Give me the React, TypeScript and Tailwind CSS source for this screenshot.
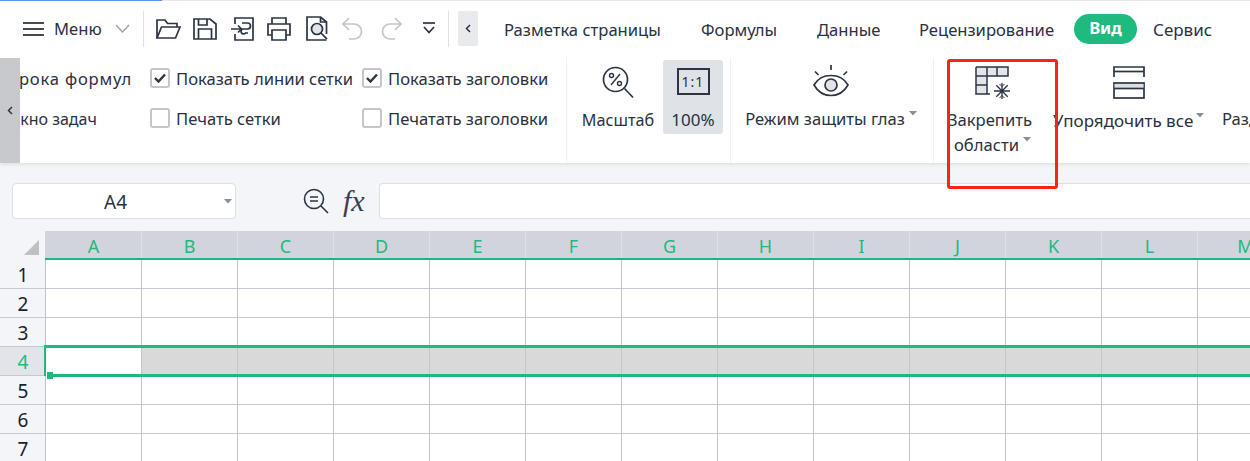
import React from "react";

const S = "#2c3444";

function Svg({ w, h, children, className }: { w: number; h: number; children: React.ReactNode; className?: string }) {
  return (
    <svg width={w} height={h} viewBox={`0 0 ${w} ${h}`} fill="none" stroke={S} strokeWidth={1.7} className={className}>
      {children}
    </svg>
  );
}

const Folder = () => (
  <Svg w={26} h={24}>
    <path d="M2 21V3h8l2.500 3.500H22V10" />
    <path d="M2 21L6.500 10H25L20.500 21Z" />
  </Svg>
);
const Save = () => (
  <Svg w={24} h={24}>
    <path d="M1 2H17L23 7V22H1Z" />
    <path d="M5.500 2V8H14V2M5.500 22V12H18.500V22" />
  </Svg>
);
const Export = () => (
  <Svg w={26} h={26}>
    <path d="M5 8V2H23V24H5V18" />
    <path d="M1 13H11M8 9.500L11.500 13L8 16.500" />
    <path d="M12 7H17.500A3 3 0 0 1 17.500 13H13A2.500 2.500 0 1 0 15.500 17H18" />
  </Svg>
);
const Printer = () => (
  <Svg w={26} h={26}>
    <path d="M6 8V2H20V8" />
    <path d="M6 19H2V8H24V19H20" />
    <path d="M6 14H20V24H6Z" />
  </Svg>
);
const Preview = () => (
  <Svg w={24} h={26}>
    <path d="M21.500 18V6L15.500 1H2V24H21.500" />
    <path d="M15.500 1V6H21.500" />
    <circle cx="12" cy="13" r="5.500" fill="#e4e5e8" />
    <path d="M16 17L22 23" />
  </Svg>
);
const Undo = ({ flip }: { flip?: boolean }) => (
  <svg width={22} height={24} viewBox="0 0 22 24" fill="none" stroke="#c3c5c9" strokeWidth={1.7} style={flip ? { transform: "scaleX(-1)" } : undefined}>
    <path d="M8 1L2 7L8 13" />
    <path d="M2 7H13A7.500 7.500 0 0 1 13 22H8" />
  </svg>
);
const QuickMenu = () => (
  <Svg w={14} h={13}>
    <path d="M1 1H13" />
    <path d="M2 5L7 10.500L12 5" />
  </Svg>
);
const ZoomIcon = () => (
  <Svg w={32} h={33}>
    <circle cx="13.500" cy="13.500" r="12" />
    <path d="M22.500 22.500L31 31.500" />
    <path d="M9 19L18 8" strokeWidth={1.4} />
    <circle cx="9.500" cy="9.500" r="2" strokeWidth={1.4} />
    <circle cx="17.500" cy="17.500" r="2" strokeWidth={1.4} />
  </Svg>
);
const Eye = () => (
  <Svg w={36} h={34}>
    <path d="M18 1V6M2 7.500L5.500 11M34 7.500L30.500 11" />
    <path d="M1 21C5 14 11 11.500 18 11.500C25 11.500 31 14 35 21C31 28 25 31.500 18 31.500C11 31.500 5 28 1 21Z" />
    <circle cx="18" cy="21" r="6" fill="#e2e3e6" />
  </Svg>
);
const Freeze = () => (
  <Svg w={38} h={34}>
    <rect x="1" y="1" width="11" height="27" fill="#e4e5e8" stroke="none" />
    <rect x="12" y="1" width="21" height="9" fill="#e4e5e8" stroke="none" />
    <path d="M1 1H33V10H1M1 19H12M1 1V28H15M12 1V28M22 1V10M33 1V10" strokeWidth={1.5} />
    <path d="M19 25H35M27 17V33M21.300 19.300L32.700 30.700M32.700 19.300L21.300 30.700" strokeWidth={1.3} />
    <path d="M24.500 18L27 20.500L29.500 18M24.500 32L27 29.500L29.500 32" strokeWidth={1} />
  </Svg>
);
const Arrange = () => (
  <Svg w={32} h={34}>
    <path d="M1 11V1H31V11" />
    <path d="M1 5.500H31" />
    <rect x="1" y="17" width="30" height="15" />
    <rect x="1.500" y="18" width="29" height="4" fill="#dcdde0" stroke="none" />
    <path d="M1 22.500H31" />
  </Svg>
);
const Caret = ({ className = "" }: { className?: string }) => (
  <svg width={8} height={5} viewBox="0 0 8 5" className={className}>
    <path d="M0 0H8L4 4.500Z" fill="#8a8e99" />
  </svg>
);

function Check({ on, label }: { on?: boolean; label: string }) {
  return (
    <div className="flex h-5 items-center gap-[6px] whitespace-nowrap">
      <span className="flex h-5 w-5 items-center justify-center rounded-[3px] border-2 border-[#c4c6cb] bg-white">
        {on && (
          <svg width="14" height="12" viewBox="0 0 14 12" fill="none" stroke={S} strokeWidth={2.4}>
            <path d="M2 6L5.500 9.500L12 2.500" />
          </svg>
        )}
      </span>
      <span className="pt-[2px]">{label}</span>
    </div>
  );
}

const Sep = () => <div className="h-[105px] w-px shrink-0 bg-[#f0f1f3]" />;

const cols = ["A", "B", "C", "D", "E", "F", "G", "H", "I", "J", "K", "L", "M"];

function GridRow({ n }: { n: number }) {
  const active = n === 4;
  return (
    <div className={`relative flex h-[29px] shrink-0 ${active ? "z-10" : ""}`}>
      <div
        className={`flex w-[46px] shrink-0 items-center justify-center border-r border-b border-r-[#bfc3cf] border-b-[#c6c9d4] pl-[1px] pt-[3px] text-[19px] ${
          active ? "bg-[#e2e4ea] text-[#20b97f]" : "bg-[#f4f5f8] text-[#1b1f2a]"
        }`}
      >
        {n}
      </div>
      {cols.map((c, i) => (
        <div
          key={c}
          className={`h-full w-[96px] shrink-0 border-r border-b border-r-[#c3c6d2] border-b-[#c6c9d4] ${
            active && i > 0 ? "bg-[#d9d9d9]" : "bg-white"
          }`}
        />
      ))}
      {active && (
        <>
          <div className="absolute left-[44px] right-0 top-[-2px] h-[3px] bg-[#1fb97e]" />
          <div className="absolute left-[44px] top-[-2px] h-[31px] w-[2px] bg-[#1fb97e]" />
          <div className="absolute left-[53px] right-0 top-[27px] h-[3px] bg-[#1fb97e]" />
          <div className="absolute left-[46px] top-[25px] h-[7px] w-[7px] border-l border-white bg-[#1fb97e]" />
        </>
      )}
    </div>
  );
}

export default function App() {
  return (
    <div
      className="relative flex h-[461px] w-[1250px] flex-col overflow-hidden bg-white text-[16.6px] text-[#2a3142]"
      style={{ fontFamily: '"Noto Sans", "Liberation Sans", sans-serif' }}
    >
      <div className="flex h-px shrink-0 bg-[#e6e8ec]">
        <div className="w-[162px] bg-[#5b8ff9]" />
      </div>

      {/* top bar */}
      <div className="flex h-[57px] shrink-0 items-center pb-[2px]">
        <div className="ml-[23px] flex w-[21px] flex-col gap-[4px]">
          <div className="h-[2px] bg-[#454b59]" />
          <div className="h-[2px] bg-[#454b59]" />
          <div className="h-[2px] bg-[#454b59]" />
        </div>
        <span className="ml-[10px] w-[49px] whitespace-nowrap pt-[2px]">Меню</span>
        <svg width="15" height="9" viewBox="0 0 15 9" fill="none" stroke="#9ca0a8" strokeWidth="1.400" className="ml-[12px]">
          <path d="M1 1L7.500 8L14 1" />
        </svg>
        <div className="ml-[13px] h-[36px] w-px bg-[#dfe1e5]" />
        <div className="ml-[11px] flex items-center">
          <Folder />
          <span className="w-[12px]" />
          <Save />
          <span className="w-[13px]" />
          <Export />
          <span className="w-[10px]" />
          <Printer />
          <span className="w-[13px]" />
          <Preview />
          <span className="w-[12px]" />
          <Undo />
          <span className="w-[18px]" />
          <Undo flip />
          <span className="w-[19px]" />
          <QuickMenu />
        </div>
        <div className="ml-[12px] h-[36px] w-px bg-[#dfe1e5]" />
        <div className="ml-[9px] flex h-[35px] w-[20px] items-center justify-center bg-[#e8eaee]">
          <svg width="6" height="9" viewBox="0 0 6 9" fill="none" stroke={S} strokeWidth="1.500">
            <path d="M5 1L1.500 4.500L5 8" />
          </svg>
        </div>
        <div className="relative ml-[26px] flex items-center whitespace-nowrap">
          <span className="w-[197px] pt-[3px]">Разметка страницы</span>
          <span className="w-[116px] pt-[3px]">Формулы</span>
          <span className="w-[102px] pt-[3px]">Данные</span>
          <span className="w-[155px] pt-[3px]">Рецензирование</span>
          <span className="flex h-[30px] w-[63px] items-center justify-center rounded-full bg-[#1fba7f] font-bold text-white">Вид</span>
          <span className="ml-[16px] pt-[3px] text-[17px]">Сервис</span>
        </div>
      </div>

      {/* ribbon */}
      <div className="relative z-20 flex h-[105px] shrink-0 bg-white shadow-[0_2px_3px_rgba(0,0,0,0.08)]">
        <div className="flex h-[105px] w-[20px] shrink-0 items-center justify-center bg-[#c8c9cd]">
          <svg width="6" height="9" viewBox="0 0 6 9" fill="none" stroke={S} strokeWidth="1.500">
            <path d="M5 1L1.500 4.500L5 8" />
          </svg>
        </div>
        <div className="flex w-[130px] shrink-0 flex-col gap-[20px] overflow-hidden pt-[11px] whitespace-nowrap">
          <div className="ml-[-21px] h-5 leading-5 tracking-[0.8px]">Строка формул</div>
          <div className="ml-[-12px] h-5 text-[16px] leading-5">Окно задач</div>
        </div>
        <div className="flex w-[212px] shrink-0 flex-col gap-[20px] pt-[10px]">
          <Check on label="Показать линии сетки" />
          <Check label="Печать сетки" />
        </div>
        <div className="flex w-[204px] shrink-0 flex-col gap-[20px] pt-[10px]">
          <Check on label="Показать заголовки" />
          <Check label="Печатать заголовки" />
        </div>
        <Sep />
        <div className="flex w-[96px] shrink-0 flex-col items-center pt-[8px] pl-[6px]">
          <ZoomIcon />
          <span className="mt-[9px] whitespace-nowrap text-[16.2px] leading-6">Масштаб</span>
        </div>
        <div className="mt-[2px] flex h-[74px] w-[60px] shrink-0 flex-col items-center rounded-[3px] bg-[#dfe2e6] pt-[8px]">
          <div className="flex h-[27px] w-[33px] items-center justify-center border-2 border-[#2c3444] text-[14px] leading-none tracking-[1px]">
            1:1
          </div>
          <span className="mt-[13px] whitespace-nowrap text-[17px] leading-6">100%</span>
        </div>
        <div className="w-[7px] shrink-0" />
        <Sep />
        <div className="flex w-[202px] shrink-0 flex-col items-center pt-[6px] pr-[2px]">
          <Eye />
          <div className="mt-[9px] flex items-start whitespace-nowrap leading-6">
            Режим защиты глаз
            <Caret className="ml-[4px] mt-[4px]" />
          </div>
        </div>
        <Sep />
        <div className="flex w-[120px] shrink-0 flex-col items-start pt-[8px]">
          <div className="ml-[41px]">
            <Freeze />
          </div>
          <span className="ml-[14px] mt-[8px] whitespace-nowrap leading-6">Закрепить</span>
          <div className="ml-[20px] mt-[1px] flex items-start whitespace-nowrap leading-6">
            области
            <Caret className="ml-[4px] mt-[4px]" />
          </div>
        </div>
        <div className="ml-[-1px] flex w-[169px] shrink-0 flex-col items-start pt-[8px]">
          <div className="ml-[60px]">
            <Arrange />
          </div>
          <div className="mt-[9px] flex items-start whitespace-nowrap text-[17px] leading-6">
            Упорядочить все
            <Caret className="ml-[3px] mt-[4px]" />
          </div>
        </div>
        <span className="mt-[49px] whitespace-nowrap leading-6">Разделить окно</span>
      </div>

      {/* red annotation */}
      <div className="pointer-events-none absolute left-[947px] top-[59px] z-30 h-[130px] w-[111px] rounded-[3px] border-[3px] border-[#fb2317]" />

      {/* formula bar */}
      <div className="flex h-[68px] shrink-0 items-start bg-[#f4f5f8] pt-[20px]">
        <div className="ml-[12px] flex h-[36px] w-[224px] items-center rounded-[4px] border border-[#dcdfe5] bg-white">
          <span className="w-[205px] pt-[2px] text-center text-[19px]">A4</span>
          <Caret className="ml-[6px]" />
        </div>
        <svg width="26" height="26" viewBox="0 0 26 26" fill="none" stroke={S} strokeWidth="1.600" className="ml-[67px] mt-[5px]">
          <circle cx="11" cy="11" r="9.500" />
          <path d="M7 9H15M7 13H15M18 18L25 25" />
        </svg>
        <span
          className="ml-[14px] mt-[2px] w-[26px] text-[30px] italic leading-[32px] text-[#3a4050]"
          style={{ fontFamily: '"Liberation Serif", serif' }}
        >
          fx
        </span>
        <div className="ml-[10px] h-[36px] flex-1 rounded-l-[4px] border border-r-0 border-[#dcdfe5] bg-white" />
      </div>

      {/* sheet */}
      <div className="flex flex-1 flex-col overflow-hidden">
        <div className="flex h-[29px] shrink-0">
          <div className="flex h-[29px] w-[45px] shrink-0 items-end justify-end bg-[#f4f5f8] pb-[5px] pr-[6px]">
            <svg width="15" height="15" viewBox="0 0 15 15">
              <path d="M15 0V15H0Z" fill="#bfc0c3" />
            </svg>
          </div>
          <div className="flex h-[29px] flex-1 border-b-2 border-[#1fb97e] bg-[#d1d4dc]">
            <div className="w-px shrink-0" />
            {cols.map((c) => (
              <div key={c} className="flex w-[96px] shrink-0 items-center justify-center border-r border-[#dfe1e7] pt-[3px] text-[18px] text-[#20b97f]">
                {c}
              </div>
            ))}
          </div>
        </div>
        {[1, 2, 3, 4, 5, 6, 7].map((n) => (
          <GridRow key={n} n={n} />
        ))}
      </div>
    </div>
  );
}
